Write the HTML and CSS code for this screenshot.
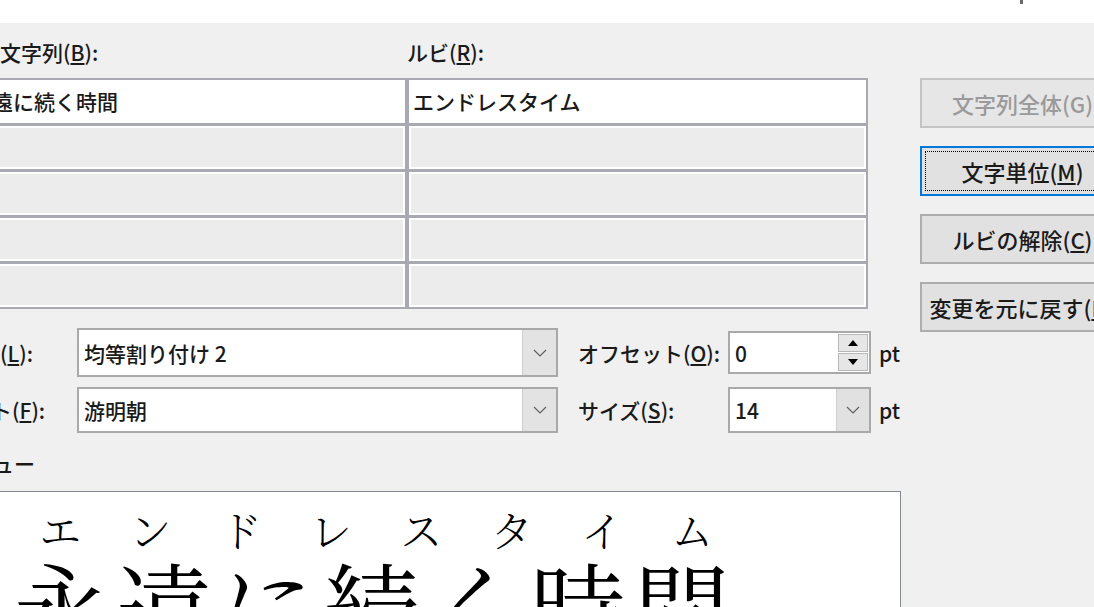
FILE: index.html
```html
<!DOCTYPE html>
<html lang="ja">
<head>
<meta charset="utf-8">
<title>ルビ</title>
<link rel="stylesheet" href="styles.css">
</head>
<body>
<div class="top"><span class="title-frag"></span></div>
<div class="dialog">
  <div class="main">
    <div class="heads">
      <div class="head head-base">対象文字列(<u>B</u>):</div>
      <div class="head">ルビ(<u>R</u>):</div>
    </div>
    <div class="grid">
      <div class="cell cell-on cell-l">永遠に続く時間</div>
      <div class="cell cell-on">エンドレスタイム</div>
      <div class="cell"></div><div class="cell"></div>
      <div class="cell"></div><div class="cell"></div>
      <div class="cell"></div><div class="cell"></div>
      <div class="cell"></div><div class="cell"></div>
    </div>
    <div class="opts">
      <div class="opt-row opt-row-1">
        <div class="lbl">配置(<u>L</u>):</div>
        <div class="combo">
          <span class="field-text">均等割り付け 2</span>
          <span class="drop"><svg width="14" height="8" viewBox="0 0 14 8"><polyline points="1,1 7,7 13,1" fill="none" stroke="#606060" stroke-width="1.2"/></svg></span>
        </div>
        <div class="lbl2">オフセット(<u>O</u>):</div>
        <div class="spin">
          <span class="field-text">0</span>
          <span class="spin-btns">
            <span class="sb"><svg width="10" height="6" viewBox="0 0 10 6"><polygon points="5,0 10,6 0,6" fill="#000"/></svg></span>
            <span class="sb"><svg width="10" height="6" viewBox="0 0 10 6"><polygon points="0,0 10,0 5,6" fill="#000"/></svg></span>
          </span>
        </div>
        <span class="unit">pt</span>
      </div>
      <div class="opt-row opt-row-2">
        <div class="lbl lbl-font">フォント(<u>F</u>):</div>
        <div class="combo">
          <span class="field-text">游明朝</span>
          <span class="drop"><svg width="14" height="8" viewBox="0 0 14 8"><polyline points="1,1 7,7 13,1" fill="none" stroke="#606060" stroke-width="1.2"/></svg></span>
        </div>
        <div class="lbl2">サイズ(<u>S</u>):</div>
        <div class="spin sel">
          <span class="field-text">14</span>
          <span class="drop drop-s"><svg width="14" height="8" viewBox="0 0 14 8"><polyline points="1,1 7,7 13,1" fill="none" stroke="#606060" stroke-width="1.2"/></svg></span>
        </div>
        <span class="unit">pt</span>
      </div>
    </div>
    <div class="pv-label">プレビュー</div>
    <div class="preview">
      <div class="ruby-line">
        <span>エ</span><span>ン</span><span>ド</span><span>レ</span><span>ス</span><span>タ</span><span>イ</span><span>ム</span>
      </div>
      <div class="base-line">
        <span>永</span><span>遠</span><span>に</span><span>続</span><span>く</span><span>時</span><span>間</span>
      </div>
    </div>
  </div>
  <div class="side">
    <div class="btn btn-off">文字列全体(G)</div>
    <div class="btn btn-focus">文字単位(<u>M</u>)</div>
    <div class="btn">ルビの解除(<u>C</u>)</div>
    <div class="btn">変更を元に戻す(<u>N</u>)</div>
  </div>
</div>
</body>
</html>
```
FILE: styles.css
```css
html, body {
  margin: 0;
  padding: 0;
}
body {
  width: 1094px;
  height: 607px;
  overflow: hidden;
  background: #ffffff;
  font-family: "Noto Sans CJK JP", "Noto Sans", sans-serif;
  font-size: 21px;
  font-weight: 500;
  color: #1a1a1a;
}
.top {
  height: 23px;
  display: flex;
  background: #ffffff;
}
.title-frag {
  margin-left: 1020px;
  width: 3px;
  height: 4px;
  background: #6a6a6a;
}
.dialog {
  display: flex;
  margin-left: -42px;
  width: 1300px;
  height: 584px;
  padding-top: 15px;
  box-sizing: border-box;
  background: #f0f0f0;
}
.main {
  width: 944px;
  flex-shrink: 0;
  display: flex;
  flex-direction: column;
}
.heads {
  display: flex;
  height: 28px;
  line-height: 28px;
  white-space: nowrap;
}
.head-base {
  width: 449px;
}
.grid {
  margin: 12px 0 0 5px;
  width: 905px;
  box-sizing: border-box;
  display: grid;
  grid-template-columns: 440px 457px;
  grid-template-rows: repeat(5, 43px);
  gap: 3px 4px;
  background: #a9a9b1;
  border: 2px solid #a9a9b1;
}
.cell {
  background: #ececec;
  border: 2px solid #ffffff;
  box-sizing: border-box;
}
.cell-on {
  background: #ffffff;
  border: none;
  padding-left: 4px;
  line-height: 43px;
  white-space: nowrap;
}
.cell-l {
  padding-left: 6px;
}
.opts {
  margin-top: 19px;
  display: flex;
  flex-direction: column;
  gap: 10px;
}
.opt-row {
  display: flex;
  align-items: center;
  white-space: nowrap;
}
.opt-row-1 {
  height: 49px;
}
.opt-row-2 {
  height: 46px;
}
.lbl {
  width: 119px;
  flex-shrink: 0;
}
.lbl-font {
  margin-left: -30px;
  width: 149px;
}
.combo {
  width: 481px;
  height: 100%;
  flex-shrink: 0;
  box-sizing: border-box;
  border: 2px solid #a9a9a9;
  background: #ffffff;
  display: flex;
}
.field-text {
  flex: 1;
  padding-left: 5px;
  display: flex;
  align-items: center;
}
.drop {
  width: 33px;
  background: #e3e3e3;
  border-left: 1px solid #cfcfcf;
  display: flex;
  align-items: center;
  justify-content: center;
}
.lbl2 {
  margin-left: 20px;
  width: 150px;
  flex-shrink: 0;
}
.spin {
  width: 143px;
  height: 43px;
  flex-shrink: 0;
  box-sizing: border-box;
  border: 2px solid #a9a9a9;
  background: #ffffff;
  display: flex;
}
.sel {
  height: 46px;
}
.drop-s {
  width: 32px;
  background: #e1e1e1;
}
.spin-btns {
  width: 31px;
  display: flex;
  flex-direction: column;
  gap: 1px;
  padding: 1px 1px 1px 0;
  box-sizing: border-box;
}
.sb {
  flex: 1;
  background: #e6e6e6;
  border: 1px solid #b8b8b8;
  display: flex;
  align-items: center;
  justify-content: center;
}
.unit {
  margin-left: 8px;
}
.pv-label {
  margin: 16px 0 0 -28px;
  height: 28px;
  line-height: 28px;
  white-space: nowrap;
}
.preview {
  margin: 14px 0 0 2px;
  width: 941px;
  height: 200px;
  flex-shrink: 0;
  box-sizing: border-box;
  border: 1px solid #828790;
  background: #ffffff;
  overflow: hidden;
  font-family: "Noto Serif CJK JP", "Noto Sans CJK JP", serif;
  font-weight: 400;
  color: #000000;
}
.ruby-line {
  display: flex;
  padding: 15px 0 0 54px;
  font-size: 42px;
  line-height: 44px;
  font-weight: 300;
}
.ruby-line span {
  width: 90.3px;
  text-align: center;
  flex-shrink: 0;
}
.base-line {
  display: flex;
  margin-top: 2px;
  padding-left: 48px;
  font-size: 96px;
  line-height: 100px;
}
.base-line span {
  width: 103.5px;
  text-align: center;
  flex-shrink: 0;
}
.side {
  margin-left: 18px;
  padding-top: 40px;
  display: flex;
  flex-direction: column;
  gap: 18px;
}
.btn {
  position: relative;
  width: 205px;
  height: 50px;
  box-sizing: border-box;
  border: 2px solid #adadad;
  background: #e1e1e1;
  display: flex;
  align-items: center;
  justify-content: center;
  white-space: nowrap;
  font-size: 22px;
}
.btn-off {
  color: #9a9a9a;
  border-color: #c4c4c4;
  background: #e6e6e6;
}
.btn-focus {
  border-color: #0078d7;
}
.btn-focus::after {
  content: "";
  position: absolute;
  left: 3px;
  top: 3px;
  right: 3px;
  bottom: 3px;
  border: 1px dotted #000000;
}
```
